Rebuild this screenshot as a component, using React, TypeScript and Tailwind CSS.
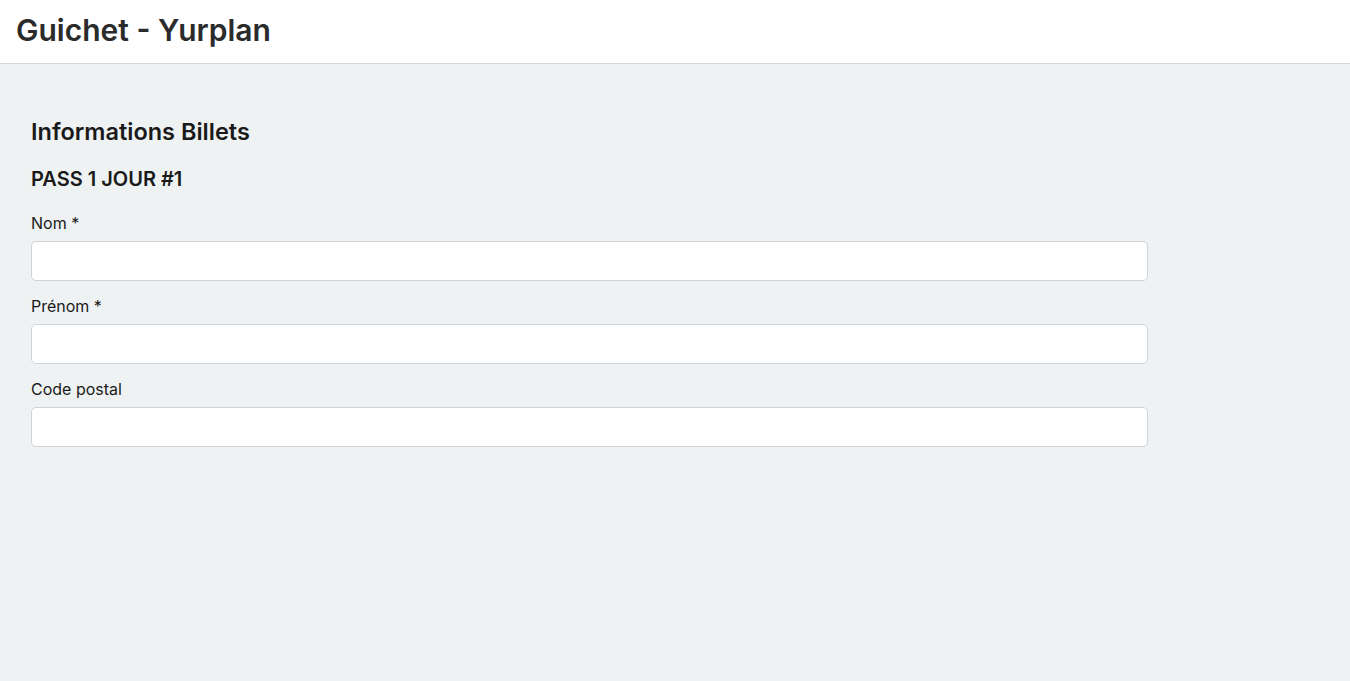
const fields = ["Nom *", "Prénom *", "Code postal"];

export default function App() {
  return (
    <div className="min-h-[681px] bg-[#eef2f3] font-['Inter',sans-serif] text-[#1a1a1a]">
      <header className="h-[64px] bg-white border-b border-[#d3d6d8] flex items-center px-4 pb-[3px]">
        <h1 className="text-[30px] font-semibold text-[#2b2b2b] leading-none">Guichet - Yurplan</h1>
      </header>
      <main className="pl-[31px] pt-[53px]">
        <h2 className="text-[23.5px] font-semibold leading-[30px] mb-[20px]">Informations Billets</h2>
        <h3 className="text-[20px] font-semibold leading-[24px] mb-[21px]">PASS 1 JOUR #1</h3>
        <div className="flex flex-col gap-[14px] w-[1117px]">
          {fields.map((label) => (
            <div key={label}>
              <label className="block text-[16px] leading-[22px] mb-[7px]">{label}</label>
              <input className="block w-full h-[40px] bg-white border border-[#ced4da] rounded-[5px] px-3 outline-none" />
            </div>
          ))}
        </div>
      </main>
    </div>
  );
}
